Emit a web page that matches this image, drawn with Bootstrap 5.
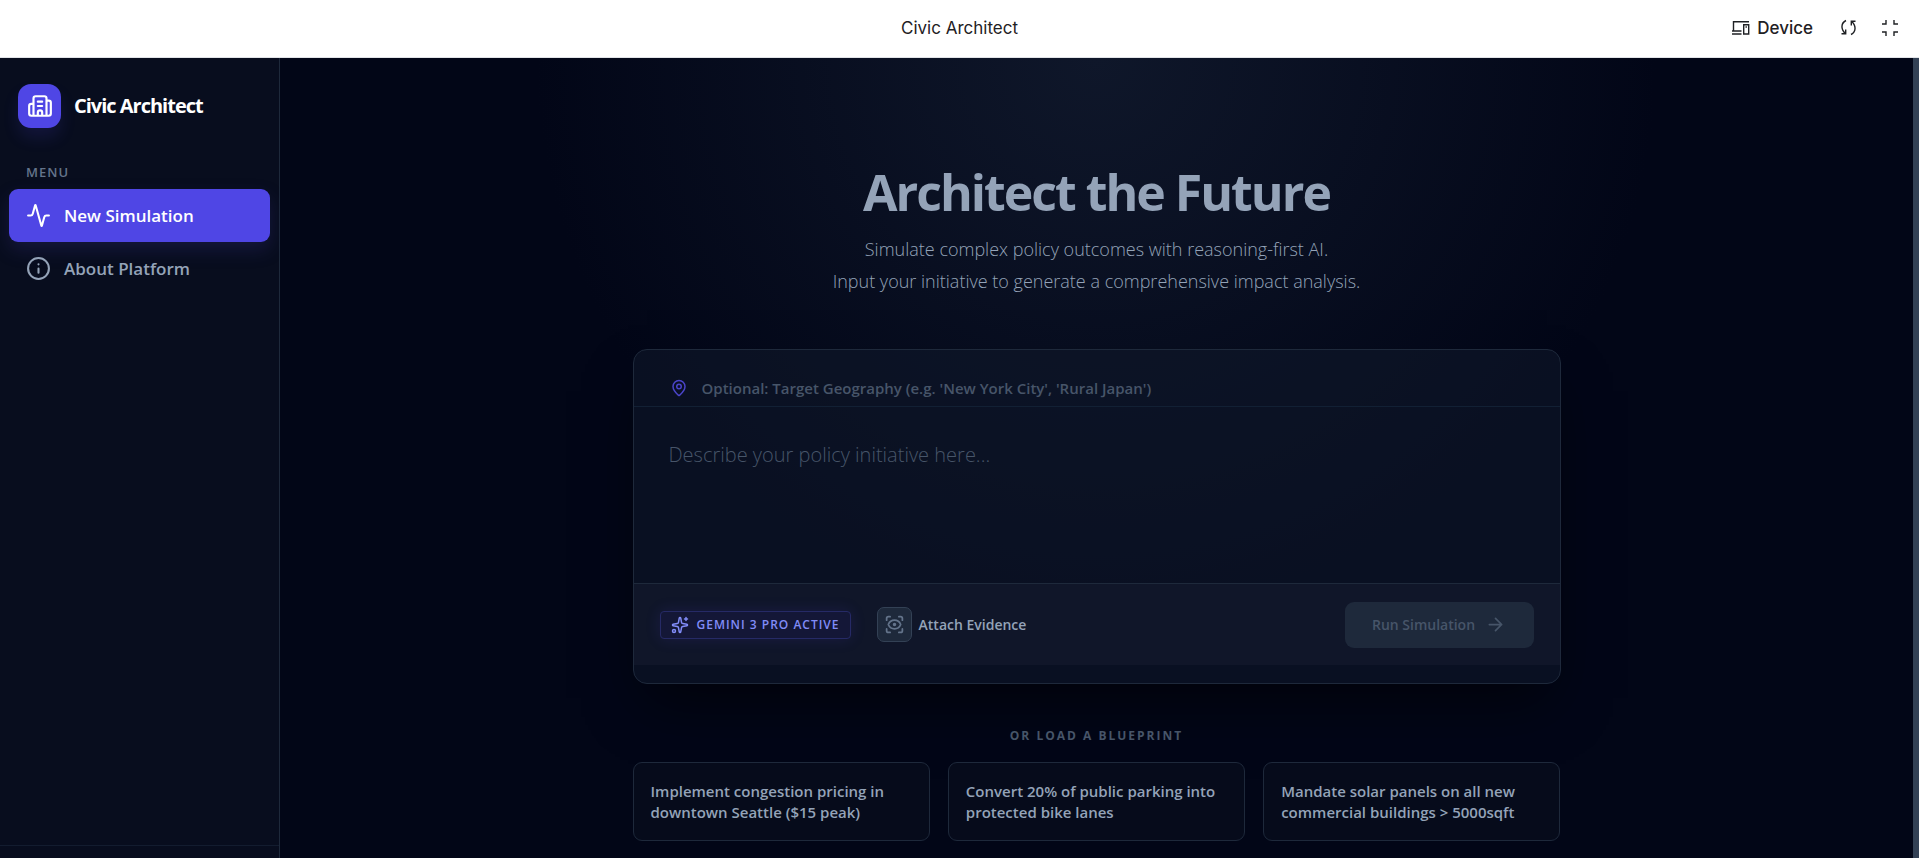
<!DOCTYPE html>
<html lang="en">
<head>
<meta charset="utf-8">
<meta name="viewport" content="width=device-width, initial-scale=1">
<title>Civic Architect</title>
<link href="https://cdn.jsdelivr.net/npm/bootstrap@5.3.0/dist/css/bootstrap.min.css" rel="stylesheet">
<style>
  :root { --ui: "Open Sans", "Noto Sans", sans-serif; --slate-4: #94a3b8; --slate-5: #64748b; --slate-6: #475569; --edge: #1e293b; --indigo: #4f46e5; }
  body { background: #020617; color: var(--slate-4); font-family: var(--ui); }
  svg { fill: none; stroke: currentColor; stroke-width: 2; stroke-linecap: round; stroke-linejoin: round; flex: none; }
  .topbar { height: 58px; background: #fff; color: #1f2124; border-bottom: 1px solid #e2e4e8; padding-bottom: 2px; font: 17px/24px Inter, sans-serif; display: grid; grid-template-columns: 1fr auto 1fr; }
  .topbar button { border: 0; background: none; padding: 0; color: inherit; }
  .topbar svg { stroke-linecap: butt; stroke-linejoin: miter; stroke-width: 1.4; }
  .top-actions { gap: 24px; padding-right: 20px; }
  .device-btn { font-weight: 500; gap: 6px; margin-right: 3px; }
  .side { width: 280px; background: #080d1e; border-right: 1px solid var(--edge); }
  .brand { gap: 13px; padding: 26px 18px 0; }
  .logo { width: 43px; height: 44px; border-radius: 13px; background: var(--indigo); color: #fff; box-shadow: 0 10px 16px rgba(79,70,229,.14); }
  .brand-name { font-size: 20px; line-height: 28px; font-weight: 700; color: #fff; letter-spacing: -1px; }
  .menu-label { font-size: 13px; line-height: 18px; font-weight: 600; color: var(--slate-5); letter-spacing: 1px; padding: 35px 26px 8px; }
  .side-nav { padding: 0 9px; }
  .side-link { height: 53px; border-radius: 9px; padding: 0 17px; gap: 13px; font-size: 17px; font-weight: 600; color: var(--slate-4); text-decoration: none; }
  .side-link.active { background: var(--indigo); color: #fff; box-shadow: 0 8px 18px rgba(49,46,129,.3); }
  .side-foot { height: 13px; border-top: 1px solid #131c2f; }
  .stage { background: radial-gradient(ellipse 560px 560px at 50% 0, #0f172a 0, #020617 100%); border-right: 6px solid #334155; }
  .lane { width: 100%; max-width: 928px; }
  .hero { padding: 103px 0 52px; }
  h1 { font-size: 50px; line-height: 62px; font-weight: 700; letter-spacing: -2px; color: var(--slate-4); margin-bottom: 10px; }
  .lead-text { font-size: 18px; line-height: 32px; font-weight: 300; }
  .composer { background: rgba(15,23,42,.6); border: 1px solid var(--edge); border-radius: 14px; box-shadow: 0 28px 54px -14px rgba(0,0,0,.6); overflow: hidden; }
  .geo { height: 57px; border-bottom: 1px solid #122034; padding: 20px 36px 0; gap: 14px; color: #4a44c8; }
  .composer input, .composer textarea { background: none; border: 0; outline: 0; padding: 0; color: #cbd5e1; resize: none; width: 100%; display: block; }
  .composer input { font-size: 15px; line-height: 20px; font-weight: 600; }
  .composer textarea { height: 176px; padding: 31px 35px; font-size: 20px; line-height: 34px; font-weight: 300; }
  ::placeholder { color: var(--slate-6) !important; opacity: 1 !important; }
  .tools { height: 82px; border-top: 1px solid var(--edge); background: #101629; padding: 0 26px; margin-bottom: 18px; }
  .model-tag { height: 28px; border: 1px solid #262a66; border-radius: 4px; background: #141737; color: #818cf8; padding: 0 10px; gap: 8px; font-size: 12px; font-weight: 600; letter-spacing: 1px; box-shadow: 0 0 15px rgba(79,70,229,.15); margin-right: 26px; }
  .attach { border: 0; background: none; padding: 0; gap: 7px; font-size: 14px; font-weight: 600; color: var(--slate-4); }
  .attach-icon { width: 35px; height: 35px; border: 1px solid #334155; border-radius: 7px; background: var(--edge); color: var(--slate-5); }
  .run { width: 189px; height: 46px; border: 0; border-radius: 9px; background: var(--edge); color: var(--slate-6); gap: 10px; font-size: 14px; font-weight: 600; }
  .or-label { font-size: 12px; line-height: 18px; font-weight: 700; letter-spacing: 2px; color: var(--slate-6); padding: 43px 0 17px; }
  .plans { --bs-gutter-x: 18px; }
  .plan { width: 100%; height: 79px; border: 1px solid var(--edge); border-radius: 9px; background: #060b1b; color: var(--slate-4); font-size: 15px; line-height: 21px; font-weight: 600; padding: 0 17px; text-align: left; }
</style>
</head>
<body class="d-flex flex-column min-vh-100">
<header class="topbar align-items-center">
  <span></span>
  <span>Civic Architect</span>
  <div class="top-actions d-flex align-items-center justify-content-end">
    <button type="button" class="device-btn d-flex align-items-center">
      <svg width="20" height="16" viewBox="0 0 20 16"><path d="M2.500 11V1.700H18M1 11h9.500M1 14h9.500M12.700 4.700h5v9.300h-5zM14.500 7h1.400"/></svg>
      Device
    </button>
    <button type="button" class="d-flex" aria-label="Reload"><svg width="17" height="17" viewBox="0 0 17 17"><path d="M6 1.500C1 4 .5 10 5.300 14.500M1.500 14.800h4.200V10.500M11 15.500c5-2.500 5.500-8.500.7-13M15.500 2.200h-4.200v4.300"/></svg></button>
    <button type="button" class="d-flex" aria-label="Exit full screen"><svg width="18" height="18" viewBox="0 0 18 18"><path d="M1 5h4V1M13 1v4h4M1 13h4v4M17 13h-4v4"/></svg></button>
  </div>
</header>
<div class="d-flex flex-grow-1">
  <aside class="side d-flex flex-column flex-shrink-0">
    <div class="brand d-flex align-items-center">
      <div class="logo d-flex align-items-center justify-content-center">
        <svg width="26" height="26" viewBox="0 0 24 24"><path d="M10 12h4M10 8h4M14 21v-3a2 2 0 0 0-4 0v3M6 10H4a2 2 0 0 0-2 2v7a2 2 0 0 0 2 2h16a2 2 0 0 0 2-2V9a2 2 0 0 0-2-2h-2M6 21V5a2 2 0 0 1 2-2h8a2 2 0 0 1 2 2v16"/></svg>
      </div>
      <span class="brand-name">Civic Architect</span>
    </div>
    <div class="menu-label">MENU</div>
    <nav class="side-nav d-flex flex-column">
      <a href="#" class="side-link active d-flex align-items-center" aria-current="page"><svg width="25" height="25" viewBox="0 0 24 24"><path d="M22 12h-2.480a2 2 0 0 0-1.930 1.460l-2.350 8.360a.25.25 0 0 1-.48 0L9.240 2.180a.25.25 0 0 0-.48 0l-2.350 8.360A2 2 0 0 1 4.490 12H2"/></svg>New Simulation</a>
      <a href="#" class="side-link d-flex align-items-center"><svg width="25" height="25" viewBox="0 0 24 24"><circle cx="12" cy="12" r="10"/><path d="M12 16v-4M12 8h.01"/></svg>About Platform</a>
    </nav>
    <div class="side-foot mt-auto"></div>
  </aside>
  <main class="stage flex-grow-1 d-flex flex-column align-items-center px-4">
    <div class="hero lane text-center">
      <h1>Architect the Future</h1>
      <p class="lead-text mb-0">Simulate complex policy outcomes with reasoning-first AI.<br>Input your initiative to generate a comprehensive impact analysis.</p>
    </div>
    <form class="composer lane" onsubmit="return false">
      <div class="geo d-flex align-items-center">
        <svg width="18" height="18" viewBox="0 0 24 24"><path d="M20 10c0 4.993-5.539 10.193-7.399 11.799a1 1 0 0 1-1.202 0C9.539 20.193 4 14.993 4 10a8 8 0 0 1 16 0"/><circle cx="12" cy="10" r="3"/></svg>
        <input type="text" aria-label="Target geography" placeholder="Optional: Target Geography (e.g. 'New York City', 'Rural Japan')">
      </div>
      <textarea aria-label="Policy initiative" placeholder="Describe your policy initiative here..."></textarea>
      <div class="tools d-flex align-items-center">
        <span class="model-tag d-flex align-items-center"><svg width="18" height="18" viewBox="0 0 24 24"><path d="M11.017 2.814a1 1 0 0 1 1.966 0l1.051 5.558a2 2 0 0 0 1.594 1.594l5.558 1.051a1 1 0 0 1 0 1.966l-5.558 1.051a2 2 0 0 0-1.594 1.594l-1.051 5.558a1 1 0 0 1-1.966 0l-1.051-5.558a2 2 0 0 0-1.594-1.594l-5.558-1.051a1 1 0 0 1 0-1.966l5.558-1.051a2 2 0 0 0 1.594-1.594zM20 2v4M22 4h-4"/><circle cx="4" cy="20" r="2"/></svg>GEMINI 3 PRO ACTIVE</span>
        <button type="button" class="attach d-flex align-items-center"><span class="attach-icon d-flex align-items-center justify-content-center"><svg width="21" height="21" viewBox="0 0 24 24"><path d="M3 7V5a2 2 0 0 1 2-2h2M17 3h2a2 2 0 0 1 2 2v2M21 17v2a2 2 0 0 1-2 2h-2M7 21H5a2 2 0 0 1-2-2v-2M18.944 12.330a1 1 0 0 0 0-.66 7.500 7.500 0 0 0-13.888 0 1 1 0 0 0 0 .66 7.500 7.500 0 0 0 13.888 0"/><circle cx="12" cy="12" r="1"/></svg></span>Attach Evidence</button>
        <button type="submit" class="run d-flex align-items-center justify-content-center ms-auto" disabled>Run Simulation<svg width="21" height="21" viewBox="0 0 24 24"><path d="M5 12h14M12 5l7 7-7 7"/></svg></button>
      </div>
    </form>
    <section class="lane">
      <div class="or-label text-center">OR LOAD A BLUEPRINT</div>
      <div class="plans row">
        <div class="col-4"><button type="button" class="plan">Implement congestion pricing in<br>downtown Seattle ($15 peak)</button></div>
        <div class="col-4"><button type="button" class="plan">Convert 20% of public parking into<br>protected bike lanes</button></div>
        <div class="col-4"><button type="button" class="plan">Mandate solar panels on all new<br>commercial buildings &gt; 5000sqft</button></div>
      </div>
    </section>
  </main>
</div>
<script src="https://cdn.jsdelivr.net/npm/bootstrap@5.3.0/dist/js/bootstrap.bundle.min.js"></script>
</body>
</html>
